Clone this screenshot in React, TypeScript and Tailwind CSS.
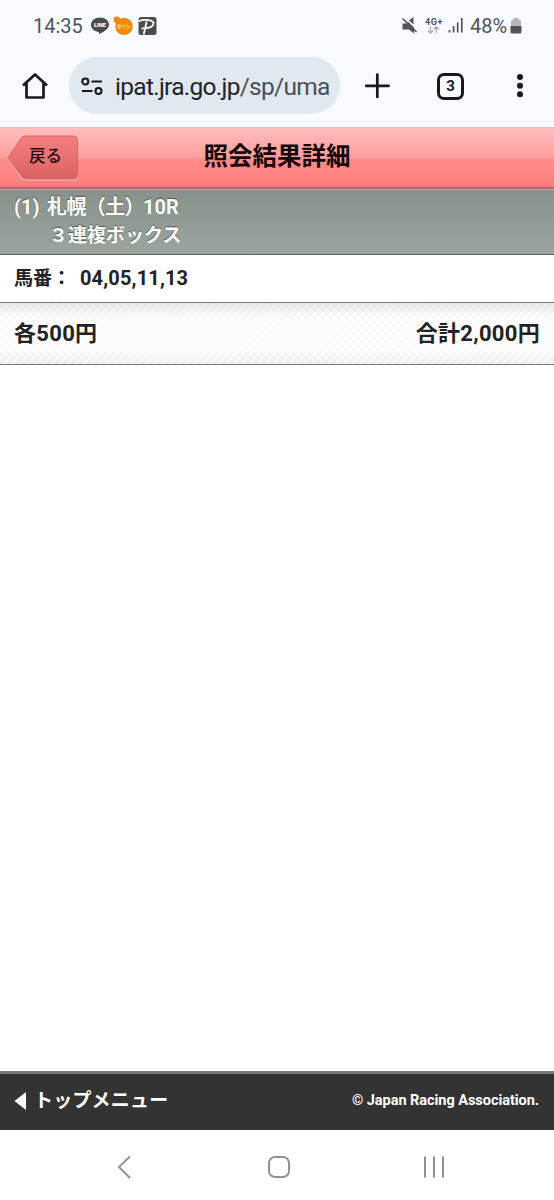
const StatusBar = () => (
  <div className="flex h-[52px] items-center pl-[33px] pr-[32px] text-[20px] leading-none text-[#505459]">
    <span className="w-[51px] whitespace-nowrap text-[20px]">14:35</span>

    {/* Notification icons */}
    <svg className="ml-[6px] shrink-0" width="20" height="20" viewBox="0 0 20 20">
      <path d="M10 1.5c-5 0-9 3.2-9 7.3 0 3.8 3.2 6.6 7.4 7.1.8.2.8.8.7 2.3 2.6-1.2 9.9-4.5 9.9-9.4 0-4.1-4-7.3-9-7.3Z" fill="#4b4c4e" />
      <text x="10" y="11" textAnchor="middle" fontFamily="Roboto" fontWeight="900" fontSize="5.8" fill="#fff">LINE</text>
    </svg>
    <svg className="ml-[3px] shrink-0" width="20" height="20" viewBox="0 0 20 20">
      <circle cx="3.8" cy="3.8" r="3.3" fill="#f18a08" />
      <circle cx="11" cy="10.4" r="8.7" fill="#f18a08" />
      <text x="11" y="12" textAnchor="middle" fontFamily="'Noto Sans CJK JP'" fontWeight="700" fontSize="4.7" fill="#ffe5b8">セゾン</text>
    </svg>
    <svg className="ml-[5px] shrink-0" width="20" height="20" viewBox="0 0 20 20">
      <rect x="0.5" y="1" width="18" height="18" rx="2.5" fill="#4b4c4e" />
      <path d="M0.6 5.200C6 3.200 15.800 3.500 15.600 7.600 15.300 11.200 10 12.300 3.500 12.300M8.700 5.500 5.700 18.500" fill="none" stroke="#fff" strokeWidth="1.8" />
    </svg>

    {/* Mute */}
    <svg className="ml-auto shrink-0" width="18" height="20" viewBox="0 0 18 20">
      <path d="M1.5 7.500h4l2-1.500 5.500 5.500V17.500l-5-4H1.5ZM8 4.600 12.5 1v7.500Z" fill="#505459" />
      <path d="m1.500 2.500 14 13.500" stroke="#505459" strokeWidth="1.700" />
    </svg>

    {/* Network */}
    <svg className="ml-[6px] shrink-0" width="19" height="20" viewBox="0 0 19 20">
      <text x="0" y="8.5" textLength="17.5" fontFamily="Roboto" fontWeight="700" fontSize="9" fill="#505459">4G+</text>
      <path d="M5.5 10.5v6.5m-2.6-2.5 2.6 2.6 2.6-2.6M11.3 17.2v-6.5m-2.6 2.6 2.6-2.6 2.6 2.6" fill="none" stroke="#a6a9ad" strokeWidth="1.2" />
    </svg>
    <svg className="ml-[3px] shrink-0" width="18" height="20" viewBox="0 0 18 20">
      <path d="M2.500 14V16.500M6.600 10.300V16.500M10.700 6.500V16.500M14.800 2V16.500" stroke="#505459" strokeWidth="1.700" />
    </svg>
    <span className="ml-[5px] w-[38px] whitespace-nowrap">48%</span>
    <svg className="ml-[2px] shrink-0" width="12" height="18" viewBox="0 0 12 18">
      <path d="M3.5 1h5v2h1A1.5 1.5 0 0 1 11 4.500V10H1V4.500A1.500 1.500 0 0 1 2.500 3h1Z" fill="#b5b7b9" />
      <path d="M0.500 9h11v6a1.500 1.500 0 0 1-1.500 1.500H2A1.500 1.500 0 0 1 .500 15Z" fill="#505459" />
    </svg>
  </div>
);

const AddressBar = () => (
  <div className="flex h-[70px] items-start border-b border-[#edf1f7] pl-[21px] pr-[30px] pt-[5px]">
    <svg className="mt-[14px] shrink-0" width="28" height="30" viewBox="0 0 28 30">
      <path d="M2 14.500 14 3.500 26 14.500M5.500 12v14.500h17V12" fill="none" stroke="#17191c" strokeWidth="2.700" strokeLinejoin="round" />
    </svg>

    <div className="ml-[20px] flex h-[57px] w-[271px] shrink-0 items-center rounded-full bg-[#e2e8f0] pl-[11px]">
      <svg className="shrink-0" width="24" height="22" viewBox="0 0 24 22">
        <g fill="none" stroke="#17191c" strokeWidth="2.100">
          <circle cx="5.300" cy="6.500" r="3" />
          <path d="M11.500 6.500h10.500M2 16h10.500" />
          <circle cx="18.500" cy="16" r="3" />
        </g>
      </svg>
      <span className="ml-[11px] pt-[3px] whitespace-nowrap text-[24.500px] leading-none tracking-[-0.720px] text-[#202328]">
        ipat.jra.go.jp<span className="text-[#4b4f56]">/sp/uma</span>
      </span>
    </div>

    <svg className="ml-[25px] mt-[16px] shrink-0" width="25" height="26" viewBox="0 0 25 26">
      <path d="M12.300 1.500v22.500M1 12.800h22.600" stroke="#17191c" strokeWidth="2.700" strokeLinecap="round" />
    </svg>
    <div className="ml-[47px] mt-[16px] flex size-[27px] shrink-0 items-center justify-center rounded-[7px] border-[3px] border-[#17191c] text-[15px] leading-none font-bold text-[#17191c]">
      3
    </div>
    <svg className="ml-auto mt-[16px] shrink-0" width="8" height="26" viewBox="0 0 8 26">
      <g fill="#17191c">
        <circle cx="4" cy="4" r="3" />
        <circle cx="4" cy="12.700" r="3" />
        <circle cx="4" cy="21.300" r="3" />
      </g>
    </svg>
  </div>
);

const Header = () => (
  <div className="grid h-[62px] grid-cols-[1fr_auto_1fr] items-start border-t border-b-2 border-t-[#e9b9bd] border-b-[#99736f] bg-[linear-gradient(180deg,#ffbcbc_0%,#ff9e9e_50%,#ff8c8c_52%,#ff7c7c_100%)]">
    <div className="relative ml-[7px] mt-[7px] h-[46px] w-[72px]">
      <svg className="absolute inset-0" width="72" height="46" viewBox="0 0 72 46">
        <defs>
          <linearGradient id="back" x1="0" y1="0" x2="0" y2="1">
            <stop offset="0" stopColor="#f67e7e" />
            <stop offset="1" stopColor="#d96363" />
          </linearGradient>
        </defs>
        <path d="M0.500 23 14 43.500q1.500 2 4 2h48q5 0 5-4.500V23Z" fill="#ffb6b3" />
        <path d="M1 22.500 14 3.500Q15.500 1 18 1h48q4.500 0 4.500 4.500v34q0 4.500-4.500 4.500H19q-2.500 0-4-2Z" fill="url(#back)" stroke="#d46969" />
      </svg>
      <span className="absolute left-[22px] top-[12px] whitespace-nowrap text-[16.500px] leading-[20px] font-medium text-[#260909]">戻る</span>
    </div>
    <h1 className="mt-[11px] whitespace-nowrap text-[24.500px] leading-[36px] font-bold text-[#140606]">照会結果詳細</h1>
  </div>
);

const BetDetail = () => (
  <div className="text-[20px] font-bold text-[#222]">
    <div className="h-[66px] border-t border-b border-t-[#a9b0aa] border-b-[#5c615d] bg-linear-to-b from-[#89918b] to-[#9ba49f] pl-[14px] pt-[3px] text-white [text-shadow:0_-1px_1px_#555]">
      <div className="flex h-[28px] items-center whitespace-nowrap leading-[28px]">
        <span className="w-[33px]">(1)</span>
        <span className="tracking-[-0.600px]">札幌（土）</span>
        <span className="ml-[-1px]">10R</span>
      </div>
      <div className="h-[28px] whitespace-nowrap pl-[35px] text-[19px] leading-[30px]">３連複ボックス</div>
    </div>

    <div className="flex h-[48px] items-center border-b border-[#777] bg-white pb-[1px] pl-[14px] whitespace-nowrap">
      <span className="w-[66px] pt-[2px] text-[19px]">馬番：</span>
      <span className="tracking-[0.150px]">04,05,11,13</span>
    </div>

    <div className="h-[62px] border-b border-[#777] bg-[repeating-linear-gradient(135deg,#fff_0px,#fdfdfd_2px,#f7f7f7_4px,#fff_5.600px)] text-[22px]">
      <div className="flex h-full items-center justify-between bg-[linear-gradient(180deg,rgba(0,0,0,0.08)_0%,transparent_25%,transparent_80%,rgba(0,0,0,0.05)_100%)] pl-[14px] pr-[14px] whitespace-nowrap">
        <span className="tracking-[0.300px]">各500円</span>
        <span className="tracking-[0.300px]">合計2,000円</span>
      </div>
    </div>
  </div>
);

const Footer = () => (
  <div className="flex h-[59px] items-center border-t-[3px] border-[#777] bg-[#333] pb-[2px] pl-[14px] pr-[15px] font-bold text-white">
    <svg className="shrink-0" width="13" height="20" viewBox="0 0 13 20">
      <path d="M12 1v18L0.500 10Z" fill="#fff" />
    </svg>
    <span className="ml-[7px] whitespace-nowrap text-[19px] leading-[28px] tracking-[0.200px]">トップメニュー</span>
    <span className="ml-auto whitespace-nowrap text-[14.500px] tracking-[-0.040px]">© Japan Racing Association.</span>
  </div>
);

const NavBar = () => (
  <div className="flex h-[70px] items-center bg-white pl-[117px] pr-[109px] pt-[4px]">
    <svg width="16" height="24" viewBox="0 0 16 24">
      <path d="M13 1.500 2 12l11 11" fill="none" stroke="#929292" strokeWidth="1.900" />
    </svg>
    <div className="ml-[135px] size-[22px] rounded-[7px] border-2 border-[#929292]" />
    <svg className="ml-auto" width="22" height="24" viewBox="0 0 22 24">
      <path d="M2 1.500v21M11 1.500v21M20 1.500v21" stroke="#929292" strokeWidth="2" />
    </svg>
  </div>
);

export default function App() {
  return (
    <div className="flex h-[1200px] w-[554px] flex-col overflow-hidden bg-white font-['Roboto','Noto_Sans_CJK_JP',sans-serif]">
      <div className="h-[127px] shrink-0 bg-[#f7faff]">
        <StatusBar />
        <AddressBar />
      </div>
      <Header />
      <BetDetail />
      <div className="flex-1" />
      <Footer />
      <NavBar />
    </div>
  );
}
